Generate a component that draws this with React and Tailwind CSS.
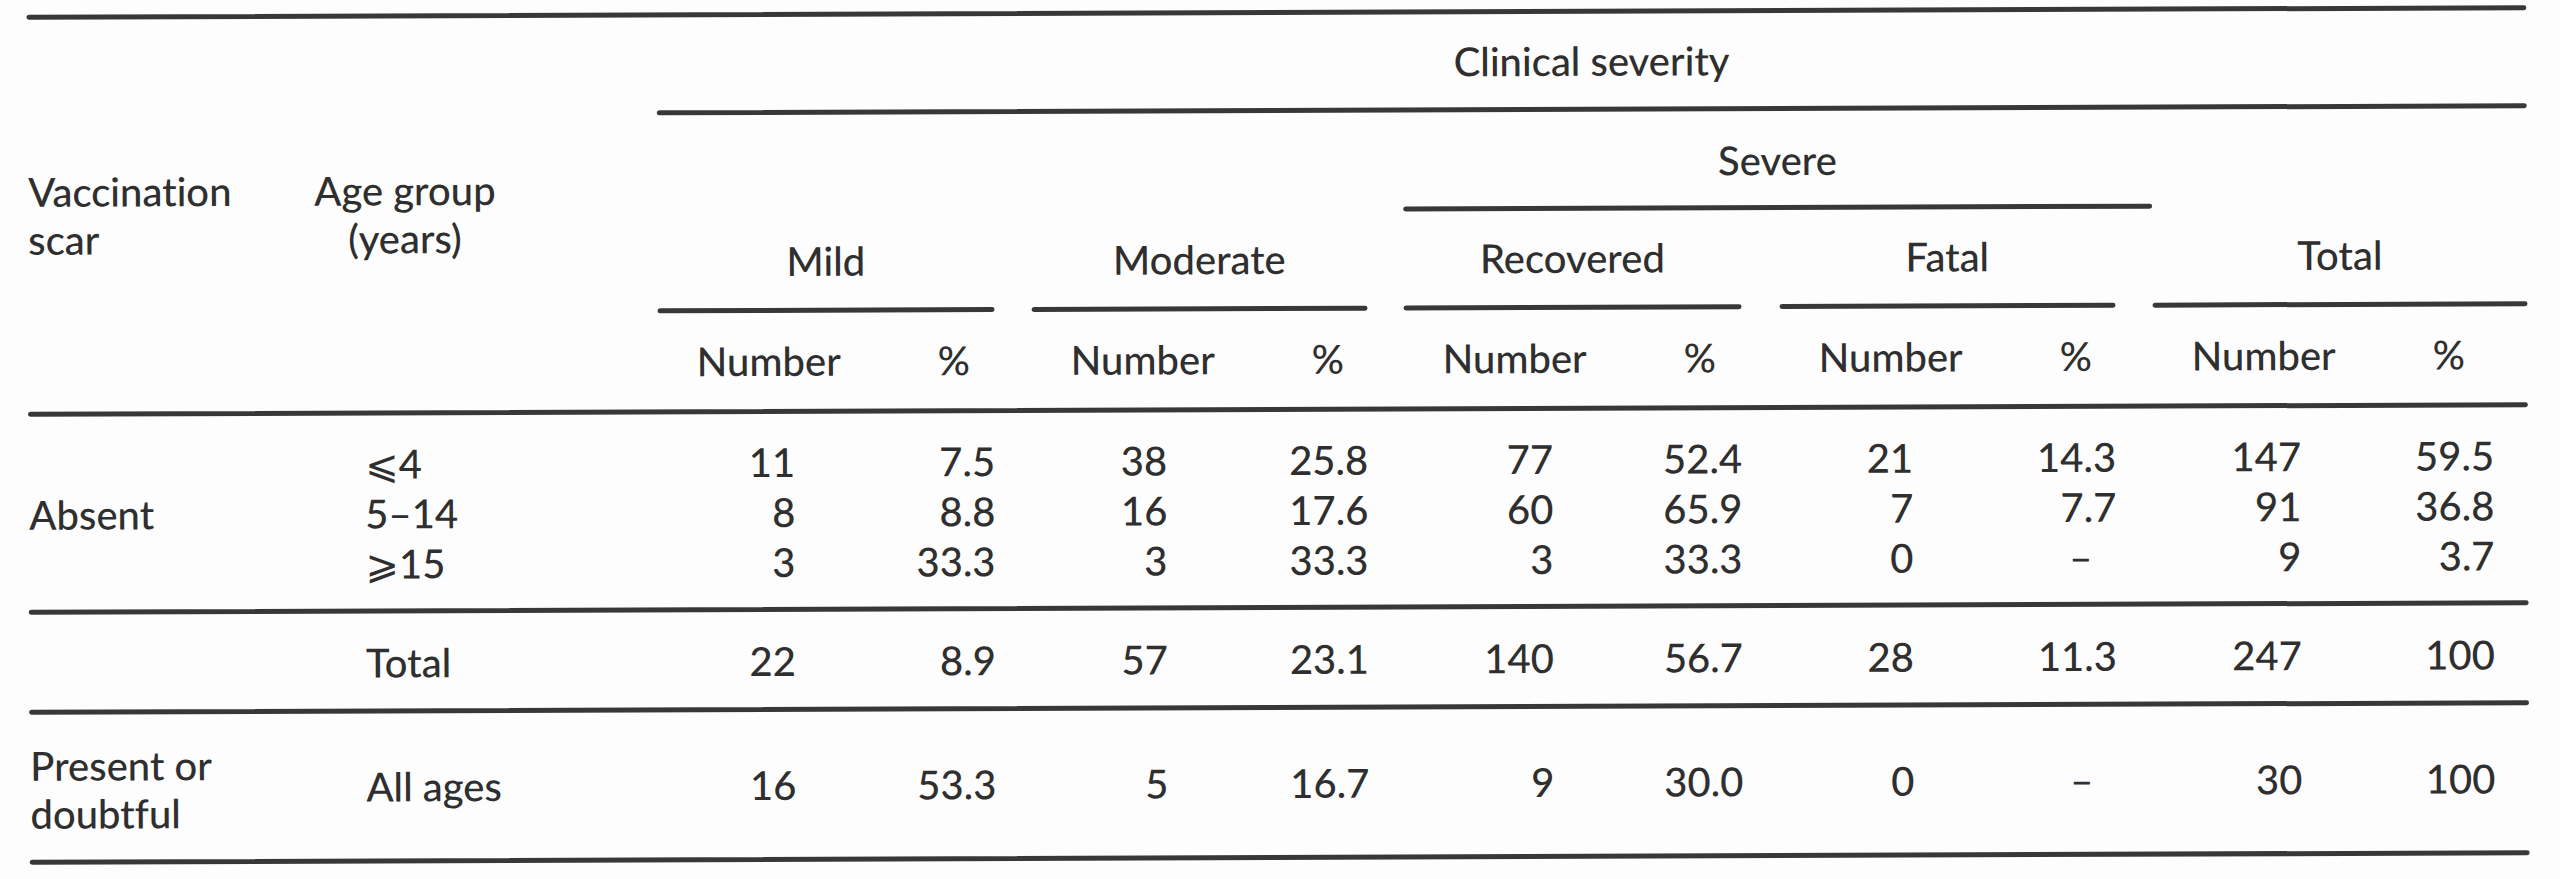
const COLS = [
  { w: 'w-[337px]', num: 'w-[137px]', pct: 'pr-0', dash: 'pr-[22px]', gap: 'w-[37px]' },
  { w: 'w-[336px]', num: 'w-[135px]', pct: 'pr-0', dash: 'pr-[22px]', gap: 'w-[36px]' },
  { w: 'w-[338px]', num: 'w-[149px]', pct: 'pr-0', dash: 'pr-[22px]', gap: 'w-[38px]' },
  { w: 'w-[336px]', num: 'w-[133px]', pct: 'pr-0', dash: 'pr-[24px]', gap: 'w-[37px]' },
  { w: 'w-[375px]', num: 'w-[148px]', pct: 'pr-[34px]', dash: 'pr-[56px]', gap: null },
]

const NAMES = ['Mild', 'Moderate', 'Recovered', 'Fatal', 'Total']

const ABSENT = [
  ['⩽4', [['11', '7.5'], ['38', '25.8'], ['77', '52.4'], ['21', '14.3'], ['147', '59.5']]],
  ['5–14', [['8', '8.8'], ['16', '17.6'], ['60', '65.9'], ['7', '7.7'], ['91', '36.8']]],
  ['⩾15', [['3', '33.3'], ['3', '33.3'], ['3', '33.3'], ['0', '–'], ['9', '3.7']]],
]
const TOTAL = [['22', '8.9'], ['57', '23.1'], ['140', '56.7'], ['28', '11.3'], ['247', '100']]
const PRESENT = [['16', '53.3'], ['5', '16.7'], ['9', '30.0'], ['0', '–'], ['30', '100']]

function Rule({ className = 'w-full' }) {
  return <div className={`h-[5px] rounded-full bg-[#383838] ${className}`} />
}

function Cells({ vals }) {
  return COLS.map((c, i) => (
    <div key={i} className="flex">
      <div className={`flex ${c.w}`}>
        <div className={`${c.num} text-right`}>{vals[i][0]}</div>
        <div className={`flex-1 text-right ${vals[i][1] === '–' ? c.dash : c.pct}`}>{vals[i][1]}</div>
      </div>
      {c.gap && <div className={c.gap} />}
    </div>
  ))
}

export default function App() {
  return (
    <div
      className="h-[879px] w-[2560px] overflow-hidden bg-[#fdfdfd] text-[40px] font-medium text-[#2f2f2f] [font-variant-ligatures:none]"
      style={{ fontFamily: 'Lato, "DejaVu Sans", sans-serif' }}
    >
      <div className="ml-[28px] w-[2500px] rotate-[-0.22deg] pt-[10px]">
        <Rule />

        {/* header */}
        <div className="flex h-[392px]">
          <div className="flex w-[287px] items-center pl-[1px] leading-[48px]">
            <div>
              Vaccination
              <br />
              scar
            </div>
          </div>
          <div className="flex w-[343px] items-center leading-[48px]">
            <div className="text-center">
              Age group
              <br />
              (years)
            </div>
          </div>
          <div className="flex flex-1 flex-col">
            <div className="flex h-[93px] items-center justify-center leading-none">Clinical severity</div>
            <Rule />
            <div className="flex h-[94px] leading-none">
              <div className="w-[746px]" />
              <div className="flex w-[749px] items-center justify-center pt-[4px]">Severe</div>
            </div>
            <div className="flex">
              <div className="w-[746px]" />
              <Rule className="w-[749px]" />
            </div>
            <div className="flex h-[94px] leading-none">
              {COLS.map((c, i) => (
                <div key={i} className="flex">
                  <div className={`flex ${c.w} items-center justify-center`}>{NAMES[i]}</div>
                  {c.gap && <div className={c.gap} />}
                </div>
              ))}
            </div>
            <div className="flex">
              {COLS.map((c, i) => (
                <div key={i} className="flex">
                  <Rule className={c.w} />
                  {c.gap && <div className={c.gap} />}
                </div>
              ))}
            </div>
            <div className="flex h-[96px] leading-none">
              {COLS.map((c, i) => (
                <div key={i} className="flex">
                  <div className={`flex ${c.w} items-center`}>
                    <div className="w-[280px] pl-[39px]">Number</div>
                    <div>%</div>
                  </div>
                  {c.gap && <div className={c.gap} />}
                </div>
              ))}
            </div>
          </div>
        </div>
        <Rule />

        {/* absent by age */}
        <div className="flex pb-[20px] pt-[23px] leading-[50px]">
          <div className="flex w-[287px] items-center pl-[1px]">Absent</div>
          <div className="flex flex-col">
            {ABSENT.map(([age, vals]) => (
              <div key={age} className="flex">
                <div className="w-[343px] pl-[50px]">{age}</div>
                <Cells vals={vals} />
              </div>
            ))}
          </div>
        </div>
        <Rule />

        {/* total */}
        <div className="flex pb-[21px] pt-[24px] leading-[50px]">
          <div className="w-[287px]" />
          <div className="w-[343px] pl-[50px]">Total</div>
          <Cells vals={TOTAL} />
        </div>
        <Rule />

        {/* present or doubtful */}
        <div className="flex h-[145px] items-center">
          <div className="w-[287px] pl-[1px] pt-[4px] leading-[48px]">
            Present or
            <br />
            doubtful
          </div>
          <div className="flex items-center leading-[50px]">
            <div className="w-[343px] pl-[50px]">All ages</div>
            <Cells vals={PRESENT} />
          </div>
        </div>
        <Rule />
      </div>
    </div>
  )
}
